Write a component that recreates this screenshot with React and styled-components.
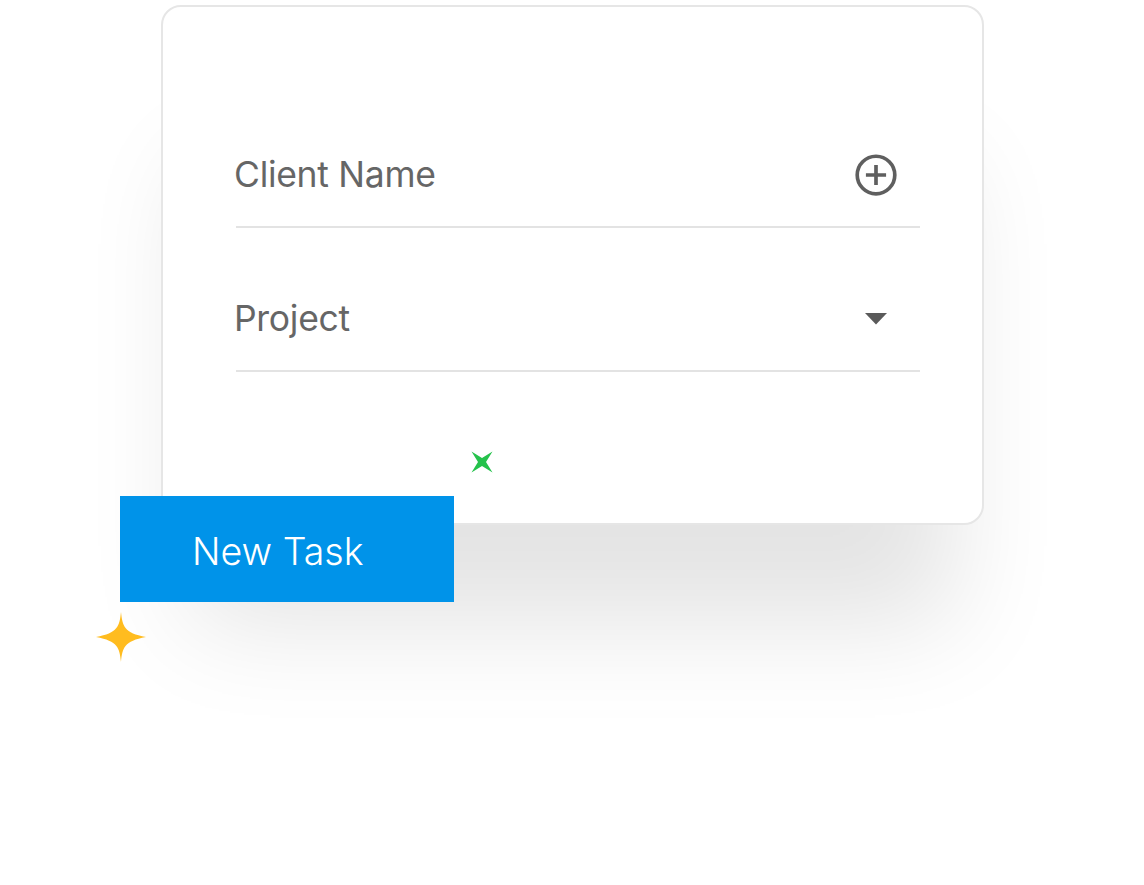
import React from "react";
import styled, { createGlobalStyle } from "styled-components";

const Global = createGlobalStyle`
  html, body { margin: 0; padding: 0; background: #ffffff; }
  body { font-family: Inter, "Noto Sans", sans-serif; }
`;

const Stage = styled.div`
  width: 1144px;
  height: 885px;
  overflow: hidden;
  padding: 5px 0 0 120px;
  box-sizing: border-box;
`;

const Composition = styled.div`
  position: relative;
  display: flex;
  flex-direction: column;
  align-items: flex-start;
`;

const Card = styled.div`
  margin-left: 41px;
  width: 823px;
  height: 520px;
  box-sizing: border-box;
  background: #ffffff;
  border: 2px solid #e6e6e6;
  border-radius: 20px;
  box-shadow: 0 130px 100px -30px rgba(0, 0, 0, 0.11);
  padding: 136px 62px 0 73px;
  display: flex;
  flex-direction: column;
  gap: 59px;
`;

const Field = styled.div`
  height: 85px;
  box-sizing: border-box;
  padding-bottom: 19px;
  border-bottom: 2px solid #e3e3e3;
  display: flex;
  align-items: center;
  justify-content: space-between;
`;

const Label = styled.span`
  font-size: 35.5px;
  font-weight: 400;
  color: #666666;
  margin-left: -2px;
  letter-spacing: -0.3px;
  margin-top: -2px;
`;

const IconBox = styled.span`
  width: 44px;
  height: 64px;
  margin-right: 22px;
  display: flex;
  align-items: center;
  justify-content: center;
`;

const Button = styled.button`
  margin-top: -29px;
  width: 334px;
  height: 106px;
  border: none;
  border-radius: 0;
  background: #0093e9;
  color: #ffffff;
  font-family: Inter, "Noto Sans", sans-serif;
  font-size: 37.5px;
  font-weight: 300;
  text-align: left;
  padding: 4px 0 0 72px;
  position: relative;
  z-index: 1;
  cursor: pointer;
`;

const Sparkle = styled.svg`
  position: absolute;
  left: ${(p) => p.$x}px;
  top: ${(p) => p.$y}px;
  z-index: 2;
`;

const PlusCircle = () => (
  <svg width="48" height="48" viewBox="0 0 48 48">
    <circle cx="24" cy="24" r="20.5" fill="none" stroke="#5f5f5f" strokeWidth="4" />
    <path d="M24 13v22M13 24h22" stroke="#5f5f5f" strokeWidth="4" />
  </svg>
);

const Caret = () => (
  <svg width="22" height="12" viewBox="0 0 22 12">
    <path d="M0 0h22L11 11.5z" fill="#5a5a5a" />
  </svg>
);

export default function App() {
  return (
    <>
      <Global />
      <Stage>
        <Composition>
          <Card>
            <Field>
              <Label>Client Name</Label>
              <IconBox>
                <PlusCircle />
              </IconBox>
            </Field>
            <Field>
              <Label>Project</Label>
              <IconBox>
                <Caret />
              </IconBox>
            </Field>
          </Card>
          <Button>New Task</Button>
          <Sparkle $x={350} $y={445} width="24" height="24" viewBox="0 0 24 24">
            <path
              d="M1.5 1.5 L12 8 L22.5 1.5 L16 12 L22.5 22.5 L12 16 L1.5 22.5 L8 12 Z"
              fill="#25c24c"
            />
          </Sparkle>
          <Sparkle $x={-24} $y={607} width="50" height="50" viewBox="0 0 50 50">
            <path
              d="M25 0 C26.5 14 28 21 50 25 C28 29 26.5 36 25 50 C23.5 36 22 29 0 25 C22 21 23.5 14 25 0 Z"
              fill="#ffbc1f"
            />
          </Sparkle>
        </Composition>
      </Stage>
    </>
  );
}
